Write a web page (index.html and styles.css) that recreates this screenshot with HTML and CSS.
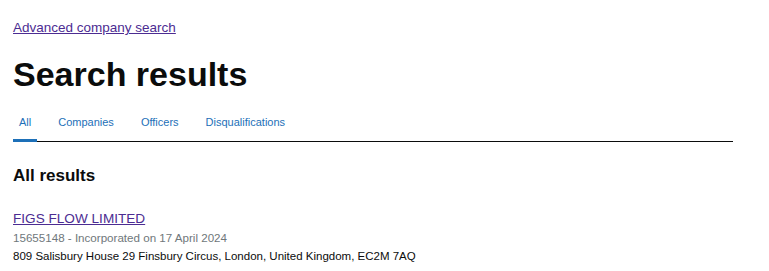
FILE: index.html
```html
<!DOCTYPE html>
<html lang="en">
<head>
<meta charset="utf-8">
<title>Search results</title>
<link rel="stylesheet" href="styles.css">
</head>
<body>
<main class="page">
  <a class="back-link" href="#">Advanced company search</a>
  <h1 class="title">Search results</h1>
  <nav class="tabs">
    <a class="tab tab-active" href="#">All</a>
    <a class="tab" href="#">Companies</a>
    <a class="tab" href="#">Officers</a>
    <a class="tab" href="#">Disqualifications</a>
  </nav>
  <h2 class="section-title">All results</h2>
  <ul class="results">
    <li class="result">
      <a class="result-link" href="#">FIGS FLOW LIMITED</a>
      <p class="result-meta">15655148 - Incorporated on 17 April 2024</p>
      <p class="result-address">809 Salisbury House 29 Finsbury Circus, London, United Kingdom, EC2M 7AQ</p>
    </li>
  </ul>
</main>
</body>
</html>
```

FILE: styles.css
```css
* { box-sizing: border-box; }
html, body { margin: 0; padding: 0; background: #fff; }
body {
  font-family: "Liberation Sans", Arial, sans-serif;
  color: #0b0c0c;
}
.page {
  width: 720px;
  margin-left: 13px;
  padding-top: 19px;
  display: flex;
  flex-direction: column;
  align-items: flex-start;
}
.back-link {
  font-size: 13.5px;
  line-height: 18px;
  color: #4c2c92;
  text-decoration: underline;
}
.title {
  margin: 18px 0 0;
  font-size: 34px;
  line-height: 38px;
  font-weight: 700;
}
.tabs {
  margin-top: 15px;
  width: 100%;
  display: flex;
  border-bottom: 1px solid #0b0c0c;
}
.tab {
  font-size: 11px;
  line-height: 14px;
  color: #1d70b8;
  text-decoration: none;
  padding: 7px 6px 10px;
  margin-right: 15px;
  border-bottom: 3px solid transparent;
  margin-bottom: -1px;
}
.tab-active { border-bottom-color: #1d70b8; color: #1d70b8; }
.section-title {
  margin: 23px 0 0;
  font-size: 17px;
  line-height: 22px;
  font-weight: 700;
}
.results { list-style: none; margin: 23px 0 0; padding: 0; }
.result { display: flex; flex-direction: column; align-items: flex-start; }
.result-link {
  font-size: 13.6px;
  line-height: 18px;
  color: #4c2c92;
}
.result-meta {
  margin: 1px 0 0;
  font-size: 11.6px;
  line-height: 18px;
  color: #6f777b;
}
.result-address {
  margin: 0;
  font-size: 11.5px;
  line-height: 18px;
}
```
